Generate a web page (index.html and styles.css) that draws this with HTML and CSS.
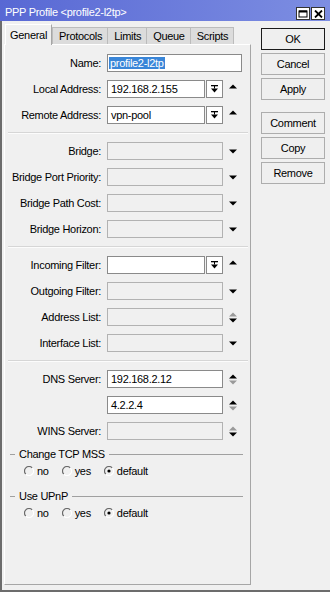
FILE: index.html
```html
<!DOCTYPE html>
<html>
<head>
<meta charset="utf-8">
<title>PPP Profile</title>
<link rel="stylesheet" href="styles.css">
</head>
<body>
<div class="window">
  <div class="titlebar">
    <span class="title">PPP Profile &lt;profile2-l2tp&gt;</span>
    <div class="tb-buttons">
      <span class="tb-btn"><svg width="10" height="8" viewBox="0 0 10 8"><rect x="1" y="1" width="8" height="6" fill="none" stroke="#000" stroke-width="1"/><rect x="1" y="0.5" width="8" height="2" fill="#000"/></svg></span>
      <span class="tb-btn"><svg width="9" height="8" viewBox="0 0 9 8"><path d="M1 0.5L8 7.5M8 0.5L1 7.5" stroke="#000" stroke-width="1.8"/></svg></span>
    </div>
  </div>
  <div class="frame">
    <div class="main">
      <div class="tabs">
        <div class="tab active">General</div>
        <div class="tab">Protocols</div>
        <div class="tab">Limits</div>
        <div class="tab">Queue</div>
        <div class="tab">Scripts</div>
      </div>
      <div class="panel">
        <div class="section">
          <div class="row"><span class="lbl">Name:</span><div class="inp w-full name"><span class="sel">profile2-l2tp</span></div></div>
          <div class="row"><span class="lbl">Local Address:</span><div class="inp w-dd">192.168.2.155</div><span class="ddbtn"><svg width="7" height="8" viewBox="0 0 7 8"><rect x="0" y="0" width="7" height="1.3" fill="#000"/><rect x="3" y="1" width="1" height="2.5" fill="#000"/><path d="M0 3.5H7L3.5 7.5Z" fill="#000"/></svg></span><span class="ic"><svg width="8" height="11" viewBox="0 0 8 11"><path d="M0 4.5L4 0.5L8 4.5Z" fill="#000"/></svg></span></div>
          <div class="row"><span class="lbl">Remote Address:</span><div class="inp w-dd">vpn-pool</div><span class="ddbtn"><svg width="7" height="8" viewBox="0 0 7 8"><rect x="0" y="0" width="7" height="1.3" fill="#000"/><rect x="3" y="1" width="1" height="2.5" fill="#000"/><path d="M0 3.5H7L3.5 7.5Z" fill="#000"/></svg></span><span class="ic"><svg width="8" height="11" viewBox="0 0 8 11"><path d="M0 4.5L4 0.5L8 4.5Z" fill="#000"/></svg></span></div>
        </div>
        <div class="sep"></div>
        <div class="section">
          <div class="row"><span class="lbl">Bridge:</span><div class="inp dis w-mid"></div><span class="ic"><svg width="8" height="5" viewBox="0 0 8 5"><path d="M0 0.5H8L4 4.5Z" fill="#000"/></svg></span></div>
          <div class="row"><span class="lbl">Bridge Port Priority:</span><div class="inp dis w-mid"></div><span class="ic"><svg width="8" height="5" viewBox="0 0 8 5"><path d="M0 0.5H8L4 4.5Z" fill="#000"/></svg></span></div>
          <div class="row"><span class="lbl">Bridge Path Cost:</span><div class="inp dis w-mid"></div><span class="ic"><svg width="8" height="5" viewBox="0 0 8 5"><path d="M0 0.5H8L4 4.5Z" fill="#000"/></svg></span></div>
          <div class="row"><span class="lbl">Bridge Horizon:</span><div class="inp dis w-mid"></div><span class="ic"><svg width="8" height="5" viewBox="0 0 8 5"><path d="M0 0.5H8L4 4.5Z" fill="#000"/></svg></span></div>
        </div>
        <div class="sep"></div>
        <div class="section">
          <div class="row"><span class="lbl">Incoming Filter:</span><div class="inp w-dd"></div><span class="ddbtn"><svg width="7" height="8" viewBox="0 0 7 8"><rect x="0" y="0" width="7" height="1.3" fill="#000"/><rect x="3" y="1" width="1" height="2.5" fill="#000"/><path d="M0 3.5H7L3.5 7.5Z" fill="#000"/></svg></span><span class="ic"><svg width="8" height="11" viewBox="0 0 8 11"><path d="M0 4.5L4 0.5L8 4.5Z" fill="#000"/></svg></span></div>
          <div class="row"><span class="lbl">Outgoing Filter:</span><div class="inp dis w-mid"></div><span class="ic"><svg width="8" height="5" viewBox="0 0 8 5"><path d="M0 0.5H8L4 4.5Z" fill="#000"/></svg></span></div>
          <div class="row"><span class="lbl">Address List:</span><div class="inp dis w-mid"></div><span class="ic"><svg width="8" height="11" viewBox="0 0 8 11"><path d="M0 4.5L4 0.5L8 4.5Z" fill="#9a9a9a"/><path d="M0 6.5H8L4 10.5Z" fill="#000"/></svg></span></div>
          <div class="row"><span class="lbl">Interface List:</span><div class="inp dis w-mid"></div><span class="ic"><svg width="8" height="5" viewBox="0 0 8 5"><path d="M0 0.5H8L4 4.5Z" fill="#000"/></svg></span></div>
        </div>
        <div class="sep"></div>
        <div class="section">
          <div class="row"><span class="lbl">DNS Server:</span><div class="inp w-mid">192.168.2.12</div><span class="ic"><svg width="8" height="11" viewBox="0 0 8 11"><path d="M0 4.5L4 0.5L8 4.5Z" fill="#000"/><path d="M0 6.5H8L4 10.5Z" fill="#9a9a9a"/></svg></span></div>
          <div class="row"><span class="lbl"></span><div class="inp w-mid">4.2.2.4</div><span class="ic"><svg width="8" height="11" viewBox="0 0 8 11"><path d="M0 4.5L4 0.5L8 4.5Z" fill="#000"/><path d="M0 6.5H8L4 10.5Z" fill="#9a9a9a"/></svg></span></div>
          <div class="row"><span class="lbl">WINS Server:</span><div class="inp dis w-mid"></div><span class="ic"><svg width="8" height="11" viewBox="0 0 8 11"><path d="M0 4.5L4 0.5L8 4.5Z" fill="#9a9a9a"/><path d="M0 6.5H8L4 10.5Z" fill="#000"/></svg></span></div>
        </div>
        <div class="group-h first"><span class="dash"></span><span class="gtitle">Change TCP MSS</span><span class="gline"></span></div>
        <div class="radios">
          <span class="radio"><svg width="10" height="10" viewBox="0 0 10 10"><path d="M8.2 1.8A4.5 4.5 0 0 0 1.8 8.2" fill="none" stroke="#6a6a6a" stroke-width="1.2"/><path d="M1.8 8.2A4.5 4.5 0 0 0 8.2 1.8" fill="none" stroke="#ffffff" stroke-width="1.2"/></svg>no</span>
          <span class="radio"><svg width="10" height="10" viewBox="0 0 10 10"><path d="M8.2 1.8A4.5 4.5 0 0 0 1.8 8.2" fill="none" stroke="#6a6a6a" stroke-width="1.2"/><path d="M1.8 8.2A4.5 4.5 0 0 0 8.2 1.8" fill="none" stroke="#ffffff" stroke-width="1.2"/></svg>yes</span>
          <span class="radio"><svg width="10" height="10" viewBox="0 0 10 10"><path d="M8.2 1.8A4.5 4.5 0 0 0 1.8 8.2" fill="none" stroke="#6a6a6a" stroke-width="1.2"/><path d="M1.8 8.2A4.5 4.5 0 0 0 8.2 1.8" fill="none" stroke="#ffffff" stroke-width="1.2"/><circle cx="5" cy="5" r="1.6" fill="#000"/></svg>default</span>
        </div>
        <div class="group-h"><span class="dash"></span><span class="gtitle">Use UPnP</span><span class="gline"></span></div>
        <div class="radios">
          <span class="radio"><svg width="10" height="10" viewBox="0 0 10 10"><path d="M8.2 1.8A4.5 4.5 0 0 0 1.8 8.2" fill="none" stroke="#6a6a6a" stroke-width="1.2"/><path d="M1.8 8.2A4.5 4.5 0 0 0 8.2 1.8" fill="none" stroke="#ffffff" stroke-width="1.2"/></svg>no</span>
          <span class="radio"><svg width="10" height="10" viewBox="0 0 10 10"><path d="M8.2 1.8A4.5 4.5 0 0 0 1.8 8.2" fill="none" stroke="#6a6a6a" stroke-width="1.2"/><path d="M1.8 8.2A4.5 4.5 0 0 0 8.2 1.8" fill="none" stroke="#ffffff" stroke-width="1.2"/></svg>yes</span>
          <span class="radio"><svg width="10" height="10" viewBox="0 0 10 10"><path d="M8.2 1.8A4.5 4.5 0 0 0 1.8 8.2" fill="none" stroke="#6a6a6a" stroke-width="1.2"/><path d="M1.8 8.2A4.5 4.5 0 0 0 8.2 1.8" fill="none" stroke="#ffffff" stroke-width="1.2"/><circle cx="5" cy="5" r="1.6" fill="#000"/></svg>default</span>
        </div>
      </div>
    </div>
    <div class="side">
      <div class="btn default">OK</div>
      <div class="btn">Cancel</div>
      <div class="btn">Apply</div>
      <div class="btn spaced">Comment</div>
      <div class="btn">Copy</div>
      <div class="btn">Remove</div>
    </div>
  </div>
</div>
</body>
</html>
```

FILE: styles.css
```css
* { box-sizing: border-box; }
html, body { margin: 0; padding: 0; }
body {
  width: 330px;
  height: 592px;
  overflow: hidden;
  background: #f0f0f0;
  font-family: "Liberation Sans", Arial, sans-serif;
  font-size: 11px;
  letter-spacing: -0.3px;
  color: #000;
}
.window {
  width: 330px;
  height: 592px;
  display: flex;
  flex-direction: column;
}
.titlebar {
  height: 21px;
  flex: none;
  background: linear-gradient(to right, #5868d4, #7d8ee2);
  display: flex;
  align-items: flex-end;
  padding: 0 5px 1px 5px;
  color: #fff;
}
.title {
  flex: 1;
  font-size: 11px;
  line-height: 14px;
  margin-bottom: 1px;
}
.tb-buttons {
  display: flex;
  gap: 1px;
}
.tb-btn {
  width: 14px;
  height: 13px;
  background: #fff;
  border: 1px solid #333;
  display: flex;
  align-items: center;
  justify-content: center;
}
.frame {
  flex: 1;
  display: flex;
  gap: 10px;
  border-left: 2px solid #6c6c6c;
  border-bottom: 2px solid #6c6c6c;
  padding: 3px 0 5px 2px;
}
.main {
  width: 247px;
  display: flex;
  flex-direction: column;
}
.tabs {
  display: flex;
  align-items: flex-end;
  height: 20px;
  padding-left: 1px;
  position: relative;
  z-index: 1;
}
.tab {
  height: 17px;
  line-height: 16px;
  padding: 0 5px 0 6px;
  background: #dcdcdc;
  border: 1px solid #bcbcbc;
  border-bottom: none;
  margin-left: -1px;
}
.tab.active {
  height: 21px;
  line-height: 20px;
  margin-bottom: -1px;
  margin-left: 0;
  margin-right: 1px;
  padding: 0 4px;
  background: #f0f0f0;
  border-color: #a6a6a6;
  border-left-color: #fff;
  border-top-color: #fff;
}
.panel {
  flex: 1;
  border: 1px solid #a6a6a6;
  border-left-color: #fff;
  border-top-color: #fff;
  padding-top: 9px;
}
.section {
  display: flex;
  flex-direction: column;
  gap: 8px;
}
.row {
  display: flex;
  align-items: center;
  height: 18px;
}
.lbl {
  width: 96px;
  margin-right: 6px;
  text-align: right;
  white-space: nowrap;
  flex: none;
}
.inp {
  height: 18px;
  border: 1px solid #8a8a8a;
  background: #fff;
  padding: 0 3px;
  line-height: 16px;
  white-space: nowrap;
  overflow: hidden;
  flex: none;
}
.inp.dis {
  background: #f0f0f0;
  border-color: #b2b2b2;
}
.inp.name { padding-left: 1px; }
.sel {
  background: #3a86d8;
  color: #fff;
  padding: 0 1px 0 1px;
}
.w-full { width: 135px; }
.w-dd { width: 98px; }
.w-mid { width: 116px; }
.ddbtn {
  width: 17px;
  height: 18px;
  margin-left: 1px;
  border: 1px solid #8a8a8a;
  background: #fff;
  display: flex;
  align-items: center;
  justify-content: center;
  flex: none;
}
.ic {
  width: 20px;
  height: 18px;
  display: flex;
  align-items: center;
  justify-content: center;
  flex: none;
}
.sep {
  height: 2px;
  border-top: 1px solid #d6d6d6;
  border-bottom: 1px solid #fcfcfc;
  margin: 8px 2px 8px 3px;
}
.group-h {
  display: flex;
  align-items: center;
  height: 12px;
  margin-top: 12px;
}
.group-h.first { margin-top: 8px; }
.dash {
  width: 5px;
  height: 1px;
  background: #a0a0a0;
  margin-left: 5px;
}
.gtitle {
  margin: 0 4px;
  line-height: 12px;
}
.gline {
  flex: 1;
  height: 1px;
  background: #a0a0a0;
  margin-right: 7px;
}
.radios {
  display: flex;
  align-items: center;
  height: 14px;
  margin-top: 4px;
  padding-left: 19px;
}
.radio {
  display: flex;
  align-items: center;
  gap: 3px;
  margin-right: 13px;
}
.side {
  width: 64px;
  display: flex;
  flex-direction: column;
  gap: 3px;
  padding-top: 4px;
}
.btn {
  height: 22px;
  line-height: 20px;
  text-align: center;
  border: 1px solid #adadad;
  background: #efefef;
}
.btn.default { border-color: #1a1a1a; }
.btn.spaced { margin-top: 9px; }
```
